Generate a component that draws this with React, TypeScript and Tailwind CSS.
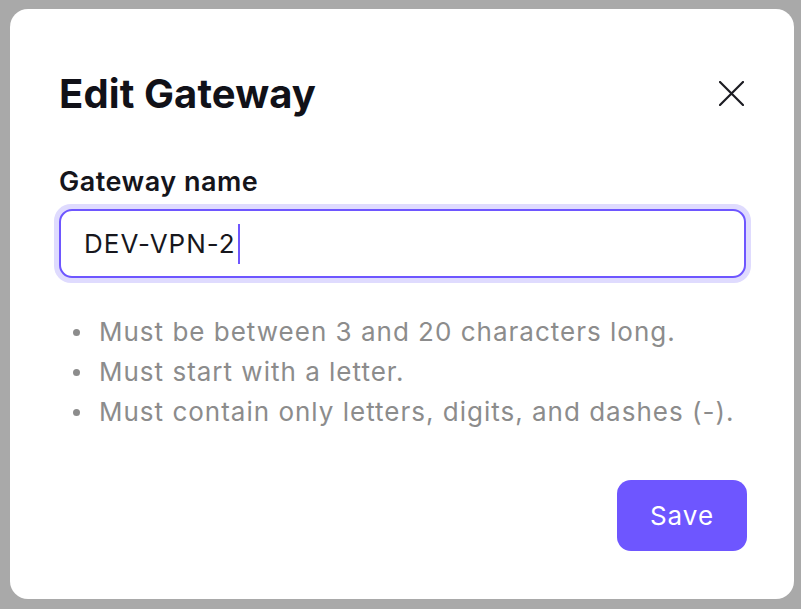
import { useState } from 'react'

const rules = [
  'Must be between 3 and 20 characters long.',
  'Must start with a letter.',
  'Must contain only letters, digits, and dashes (-).',
]

export default function App() {
  const [name] = useState('DEV-VPN-2')

  return (
    <div className="h-[609px] w-full bg-[#a9a9a9] pl-[10px] pt-[9px]" style={{ fontFamily: 'Inter, "Noto Sans", sans-serif' }}>
      <div className="flex h-[590px] w-[784px] flex-col rounded-[18px] bg-white pl-[49px] pr-[48px]">
        <div className="mt-[61px] flex items-center justify-between">
          <h2 className="text-[40px] font-bold leading-[48px] tracking-[0.1px] text-[#111118]">Edit Gateway</h2>
          <button className="-mt-[2px] mr-[2px] flex h-[26px] w-[26px] items-center justify-center text-[#1c1c22]">
            <svg width="25" height="25" viewBox="0 0 25 25" fill="none" stroke="currentColor" strokeWidth="2.2" strokeLinecap="round">
              <path d="M1 1L24 24M24 1L1 24" />
            </svg>
          </button>
        </div>

        <label className="mt-[47px] text-[27px] font-semibold leading-[34px] tracking-[0.5px] text-[#15151b]">Gateway name</label>
        <div className="mt-[5px] rounded-[17px] bg-[#dfdbfe] p-[5px] -mx-[5px]">
          <div className="flex h-[69px] items-center rounded-[13px] border-2 border-[#6e56ff] bg-white pl-[23px]">
            <span className="text-[26px] tracking-[1px] text-[#17171d]">{name}</span>
            <span className="ml-[2px] h-[40px] w-[2px] bg-[#6e56ff]" />
          </div>
        </div>

        <ul className="mt-[29px] flex flex-col">
          {rules.map(r => (
            <li key={r} className="flex items-center text-[26px] leading-[40px] tracking-[1px] text-[#8c8c8c]">
              <span className="ml-[14px] mr-[19px] h-[7px] w-[7px] shrink-0 rounded-full bg-[#8c8c8c]" />
              {r}
            </li>
          ))}
        </ul>

        <div className="mt-[48px] flex justify-end">
          <button className="-mr-[1px] h-[71px] w-[130px] rounded-[14px] bg-[#6e56ff] text-[26px] tracking-[1px] text-white">Save</button>
        </div>
      </div>
    </div>
  )
}
